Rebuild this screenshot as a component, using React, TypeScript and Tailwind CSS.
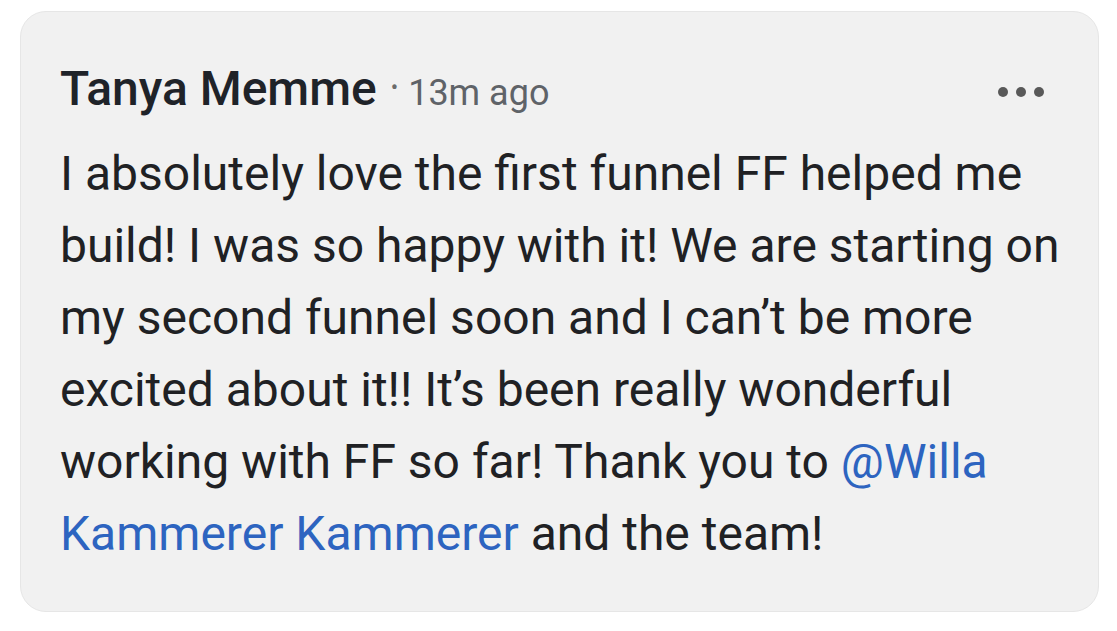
import React from "react";

export default function App() {
  return (
    <div className="w-[1117px] h-[631px] bg-white pt-[11px] pl-[20px]" style={{ fontFamily: "Roboto, 'Noto Sans', sans-serif" }}>
      <div className="w-[1079px] h-[601px] rounded-[26px] bg-[#f1f1f1] border border-[#e6e6e6] pl-[39px] pr-[30px] pt-[53px] relative">
        <div className="flex items-baseline h-[48px]">
          <span className="text-[48px] font-medium text-[#1f2329] leading-none">Tanya Memme</span>
          <span className="text-[#6b6b6b] text-[22px] ml-[14px] mr-[10px] leading-none relative -top-[10px]">•</span>
          <span className="text-[36px] text-[#5f6368] leading-none">13m ago</span>
        </div>
        <div className="absolute right-[54px] top-[75px] flex gap-[8px]">
          <div className="w-[10px] h-[10px] rounded-full bg-[#595959]" />
          <div className="w-[10px] h-[10px] rounded-full bg-[#595959]" />
          <div className="w-[10px] h-[10px] rounded-full bg-[#595959]" />
        </div>
        <div className="mt-[25px] text-[48px] leading-[72px] text-[#202124] whitespace-nowrap">
          <div>I absolutely love the first funnel FF helped me</div>
          <div>build! I was so happy with it! We are starting on</div>
          <div>my second funnel soon and I can’t be more</div>
          <div>excited about it!! It’s been really wonderful</div>
          <div>
            working with FF so far! Thank you to <span className="text-[#2d64c0]">@Willa</span>
          </div>
          <div>
            <span className="text-[#2d64c0]">Kammerer Kammerer</span> and the team!
          </div>
        </div>
      </div>
    </div>
  );
}
